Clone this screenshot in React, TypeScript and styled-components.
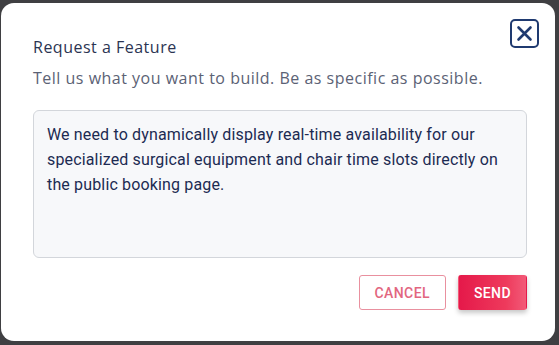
import styled, { createGlobalStyle } from "styled-components";

const Global = createGlobalStyle`
  html, body {
    margin: 0;
    padding: 0;
    background: #3f3f42;
  }
  body {
    width: 559px;
    height: 345px;
    overflow: hidden;
  }
`;

const Screen = styled.div`
  width: 559px;
  height: 345px;
  padding: 3px 4px 4px 1px;
  box-sizing: border-box;
`;

const Dialog = styled.div`
  height: 100%;
  background: #ffffff;
  border-radius: 13px;
  box-sizing: border-box;
  padding: 34px 28px 0 32px;
  display: flex;
  flex-direction: column;
  position: relative;
`;

const Title = styled.h2`
  margin: 0;
  font-family: "Open Sans", sans-serif;
  font-weight: 400;
  font-size: 16px;
  letter-spacing: 0.5px;
  line-height: 20px;
  color: #2b3452;
`;

const Subtitle = styled.p`
  margin: 11px 0 0;
  font-family: "Open Sans", sans-serif;
  font-size: 16px;
  letter-spacing: 0.5px;
  line-height: 20px;
  color: #5b6275;
`;

const CloseButton = styled.button`
  position: absolute;
  top: 16px;
  right: 16px;
  width: 29px;
  height: 29px;
  padding: 0;
  border: 2px solid #1f3a70;
  border-radius: 5px;
  background: #fff;
  display: flex;
  align-items: center;
  justify-content: center;
  cursor: pointer;
`;

const Field = styled.div`
  margin-top: 22px;
  height: 148px;
  box-sizing: border-box;
  background: #f7f8fa;
  border: 1px solid #d3d6db;
  border-radius: 6px;
  padding: 11px 13px;
  font-family: Roboto, sans-serif;
  font-size: 16px;
  letter-spacing: 0.15px;
  line-height: 25px;
  color: #1c2b52;
`;

const Actions = styled.div`
  margin-top: 17px;
  display: flex;
  justify-content: flex-end;
  gap: 12px;
`;

const Button = styled.button<{ $primary?: boolean }>`
  height: 35px;
  box-sizing: border-box;
  padding: 0 15px;
  border-radius: 3px;
  font-family: Roboto, sans-serif;
  font-weight: 500;
  font-size: 14px;
  letter-spacing: 0.4px;
  text-transform: uppercase;
  cursor: pointer;
  border: 1px solid ${(p) => (p.$primary ? "transparent" : "#e9909f")};
  color: ${(p) => (p.$primary ? "#ffffff" : "#e2667f")};
  background: ${(p) =>
    p.$primary ? "linear-gradient(90deg, #e5194a 0%, #ee3a5c 70%, #f25a78 100%)" : "#ffffff"};
  box-shadow: ${(p) => (p.$primary ? "0 3px 5px rgba(0,0,0,0.22)" : "none")};
`;

export default function App() {
  return (
    <Screen>
      <Global />
      <Dialog>
        <CloseButton aria-label="Close">
          <svg width="17" height="17" viewBox="0 0 17 17">
            <path d="M2.5 2.5 L14.5 14.5 M14.5 2.5 L2.5 14.5" stroke="#1f3a70" strokeWidth="2.6" strokeLinecap="round" />
          </svg>
        </CloseButton>
        <Title>Request a Feature</Title>
        <Subtitle>Tell us what you want to build. Be as specific as possible.</Subtitle>
        <Field>
          We need to dynamically display real-time availability for our specialized surgical equipment and chair
          time slots directly on the public booking page.
        </Field>
        <Actions>
          <Button>Cancel</Button>
          <Button $primary>Send</Button>
        </Actions>
      </Dialog>
    </Screen>
  );
}
